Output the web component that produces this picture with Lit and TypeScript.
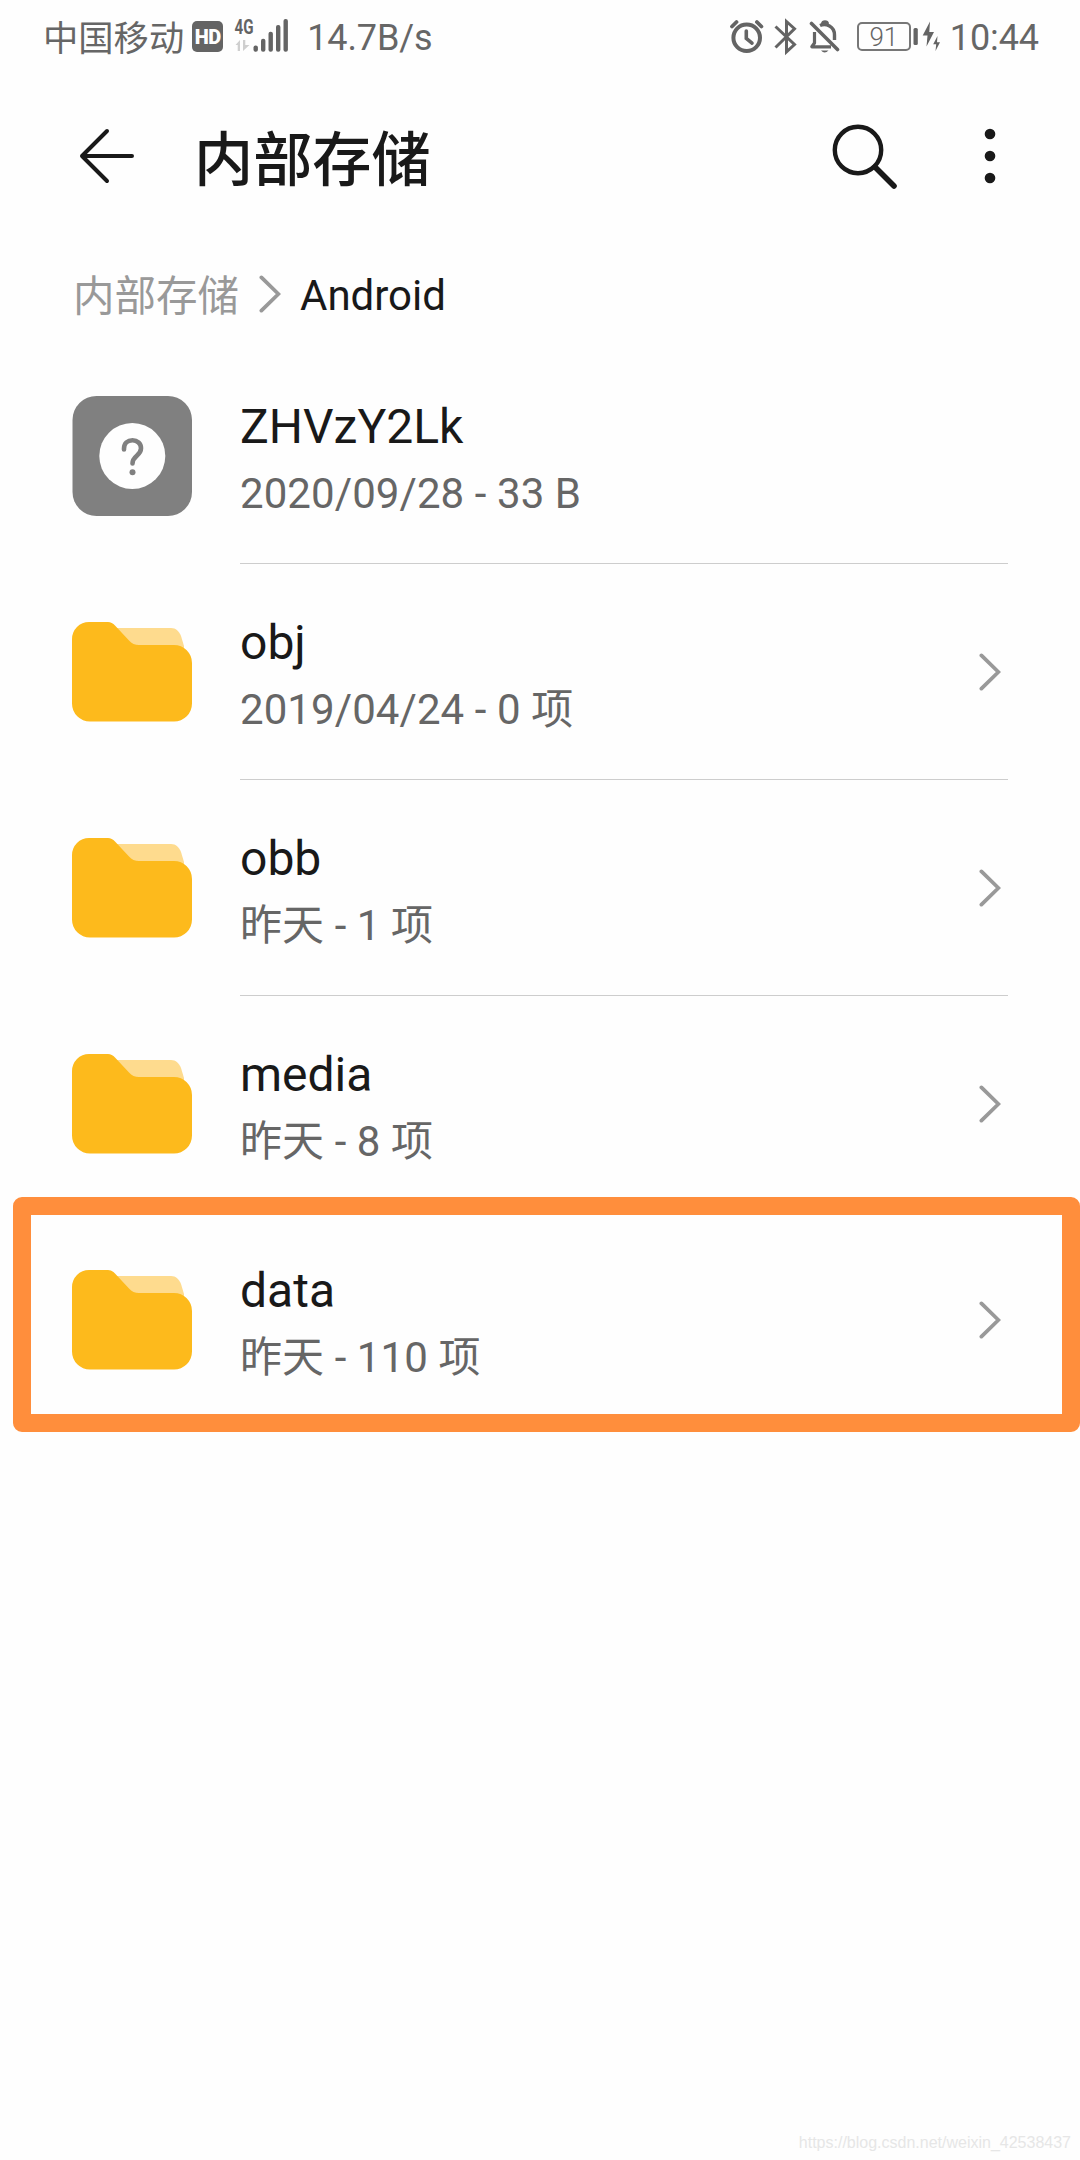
import { LitElement, html, svg, css, nothing } from "lit";
import { customElement, property } from "lit/decorators.js";
import { classMap } from "lit/directives/class-map.js";

interface Entry {
  name: string;
  info: string;
  kind: "file" | "folder";
  divider?: boolean;
  marked?: boolean;
}

const ENTRIES: Entry[] = [
  { name: "ZHVzY2Lk", info: "2020/09/28 - 33 B", kind: "file", divider: true },
  { name: "obj", info: "2019/04/24 - 0 项", kind: "folder", divider: true },
  { name: "obb", info: "昨天 - 1 项", kind: "folder", divider: true },
  { name: "media", info: "昨天 - 8 项", kind: "folder" },
  { name: "data", info: "昨天 - 110 项", kind: "folder", marked: true },
];

const chevron = (cls: string) => html`
  <svg class=${cls} width="22" height="38" viewBox="0 0 22 38" fill="none"
    stroke="currentColor" stroke-width="3.8" stroke-linecap="round">
    <path d="M2.4 2.4 19.4 19 2.4 35.6" />
  </svg>`;

const folderIcon = html`
  <svg width="120" height="120" viewBox="0 0 120 120">
    <path fill="#fedb8e" d="M36 16H99C104 16 107 19.500 109 24L112 34V46H60Z" />
    <path fill="#fdba1c"
      d="M17 10H36Q40 10 43 13.500L57 28.500Q61 33 67 33H102A18 18 0 0 1 120 51V91.500A18 18 0 0 1 102 109.500H18A18 18 0 0 1 0 91.500V27A17 17 0 0 1 17 10Z" />
  </svg>`;

const unknownIcon = html`
  <svg width="120" height="120" viewBox="0 0 120 120">
    <rect x="0.500" width="119.500" height="120" rx="24" fill="#808080" />
    <circle cx="60.300" cy="60" r="33" fill="#fefefe" />
    <path d="M52 53.500V52.500C52 47.500 55.700 44.200 60.500 44.200S69 47.600 69 52.300C69 60 60.500 59.500 60.500 67.500"
      fill="none" stroke="#808080" stroke-width="4.600" stroke-linecap="round" />
    <circle cx="60.500" cy="76.300" r="3" fill="#808080" />
  </svg>`;

@customElement("status-bar")
class StatusBar extends LitElement {
  static styles = css`
    :host {
      display: flex;
      justify-content: space-between;
      height: 74px;
      padding: 0 41px 0 43px;
      box-sizing: border-box;
      color: #666;
      font-size: 36px;
      line-height: 76px;
    }
    .side { display: flex; align-items: flex-start; white-space: nowrap; }
    .carrier { font-size: 35.3px; line-height: 78px; }
    .hd {
      width: 31px;
      height: 31px;
      margin: 21px 0 0 8px;
      border-radius: 5px;
      background: #646464;
      color: #fefefe;
      font-size: 20px;
      font-weight: 900;
      line-height: 32px;
      letter-spacing: -0.5px;
      text-align: center;
    }
    .signal { margin: 16px 0 0 10px; }
    .rate { margin-left: 17px; letter-spacing: -0.1px; }
    .icons { margin: 16px 17px 0 0; }
    .battery {
      width: 54px;
      height: 29px;
      margin-top: 22px;
      border: 2px solid #777;
      border-radius: 5px;
      box-sizing: border-box;
      font-size: 26px;
      font-weight: 300;
      line-height: 27px;
      text-align: center;
    }
    .charge { margin: 16px 8px 0 2px; }
    .time { letter-spacing: -0.1px; }
  `;

  render() {
    const bars = [45.5, 38.7, 31.7, 25, 19];
    return html`
      <div class="side">
        <span class="carrier">中国移动</span>
        <span class="hd">HD</span>
        <svg class="signal" width="57" height="40" viewBox="233 16 57 40" fill="#646464">
          <text x="234.500" y="34" font-size="20" font-weight="700"
            textLength="19" lengthAdjust="spacingAndGlyphs">4G</text>
          <g fill="#cfcfcf">
            <path d="M235.500 45 240 40V51H237.700V45Z" />
            <path d="M243 40H245.300V45H249.500L243 51Z" />
          </g>
          ${bars.map((top, i) => svg`
            <rect x=${253.5 + i * 7.5} y=${top} width="4.400" height=${51.8 - top} rx="2" />`)}
        </svg>
        <span class="rate">14.7B/s</span>
      </div>
      <div class="side">
        <svg class="icons" width="112" height="40" viewBox="728 16 112 40" fill="none" stroke="#646464">
          <circle cx="746.700" cy="37.700" r="13.300" stroke-width="4" />
          <path d="M732 26.500 736.500 22M756.900 22 761.400 26.500" stroke-width="3.800" stroke-linecap="round" />
          <path d="M746.300 31V38.500L752 43.200" stroke-width="3.600" stroke-linecap="round" />
          <path d="M775.500 26.500 794.500 44.500 786.500 51.800V21.500L794.500 28.700 775.500 47.500" stroke-width="3" />
          <path d="M811.500 23.500 837.500 49.500" stroke-width="3.600" stroke-linecap="round" />
          <path d="M814.500 32V43L811.800 46.800H831" stroke-width="3.200" stroke-linejoin="round" />
          <path d="M820 25.500C826 22.800 834.500 26.500 834.500 35V40" stroke-width="3.400" />
          <path d="M822.500 24C822 20.800 828 20.800 827.500 24" stroke-width="2.800" />
          <path d="M821 50.500H828.500Q824.700 54.500 821 50.500Z" fill="#646464" stroke="none" />
        </svg>
        <span class="battery">91</span>
        <svg class="charge" width="29" height="40" viewBox="913 16 29 40" fill="#646464">
          <rect x="913.500" y="28" width="4.300" height="17" rx="1.500" />
          <path d="M930 21.500 922.700 35.500H927.500L926.500 46.500 934 32H929.300Z" />
          <path d="M937.500 36 933.200 44.200H936.200L935.500 51 940 42.200H937Z" />
        </svg>
        <span class="time">10:44</span>
      </div>`;
  }
}

@customElement("file-row")
class FileRow extends LitElement {
  @property({ attribute: false }) entry!: Entry;

  static styles = css`
    :host { display: block; }
    .row {
      position: relative;
      display: flex;
      height: 216px;
      padding: 0 72px;
      box-sizing: border-box;
    }
    .icon { display: flex; align-items: center; width: 120px; margin-right: 48px; }
    .body { flex: 1; display: flex; box-sizing: border-box; border-bottom: 1px solid transparent; }
    .divided { border-bottom-color: #cdcdcd; }
    .texts { flex: 1; padding-top: 49px; white-space: nowrap; }
    .name { font-size: 48px; line-height: 60px; color: #191919; }
    .info {
      margin-top: 11px;
      font-size: 42px;
      line-height: 52px;
      letter-spacing: 0.08px;
      color: #666;
    }
    .go { align-self: center; margin-right: 7px; color: #999; }
    .frame {
      position: absolute;
      inset: -15px 0 -4px 13px;
      border: 18px solid #ff8e3c;
      border-radius: 9px;
    }
  `;

  render() {
    const e = this.entry;
    return html`
      <div class="row">
        <div class="icon">${e.kind === "folder" ? folderIcon : unknownIcon}</div>
        <div class=${classMap({ body: true, divided: !!e.divider })}>
          <div class="texts">
            <div class="name">${e.name}</div>
            <div class="info">${e.info}</div>
          </div>
          ${e.kind === "folder" ? chevron("go") : nothing}
        </div>
        ${e.marked ? html`<div class="frame"></div>` : nothing}
      </div>`;
  }
}

@customElement("app-root")
class AppRoot extends LitElement {
  static styles = css`
    :host {
      display: flex;
      flex-direction: column;
      width: 1080px;
      height: 2160px;
      background: #fefefe;
      color: #191919;
      font-family: Roboto, "Noto Sans CJK SC", sans-serif;
      overflow: hidden;
    }
    .header {
      display: flex;
      align-items: center;
      height: 164px;
      padding: 0 83px 0 78px;
    }
    .title {
      flex: 1;
      margin: 9px 0 0 58px;
      font-size: 59.2px;
      font-weight: 500;
      line-height: 80px;
    }
    .search { margin-right: 84px; }
    .crumbs {
      display: flex;
      align-items: center;
      height: 110px;
      padding: 6px 72px 0 73px;
      box-sizing: border-box;
      font-size: 42px;
      line-height: 60px;
    }
    .parent { padding-top: 2px; font-size: 41.5px; color: #999; }
    .sep { margin: 0 19px 4px 20px; color: #999; }
    .list { flex: 1; }
    .mark {
      padding: 0 9px 7px 0;
      font-family: "Liberation Sans", sans-serif;
      font-size: 16px;
      line-height: 20px;
      text-align: right;
      color: #e6e6e6;
    }
  `;

  render() {
    return html`
      <status-bar></status-bar>
      <div class="header">
        <svg width="58" height="58" viewBox="78 127 58 58" fill="none" stroke="#191919"
          stroke-width="4" stroke-linecap="round" stroke-linejoin="round">
          <path d="M107 131 82 156 107 181M82 156H132" />
        </svg>
        <div class="title">内部存储</div>
        <svg class="search" width="68" height="68" viewBox="831 122 68 68" fill="none" stroke="#191919">
          <circle cx="858" cy="150" r="23.200" stroke-width="4.400" />
          <path d="M875 167 894 186" stroke-width="5.600" stroke-linecap="round" />
        </svg>
        <svg width="14" height="58" viewBox="983 127 14 58" fill="#191919">
          <circle cx="990" cy="134" r="5.300" />
          <circle cx="990" cy="156" r="5.300" />
          <circle cx="990" cy="178" r="5.300" />
        </svg>
      </div>
      <div class="crumbs">
        <span class="parent">内部存储</span>
        ${chevron("sep")}
        <span>Android</span>
      </div>
      <div class="list">
        ${ENTRIES.map((entry) => html`<file-row .entry=${entry}></file-row>`)}
      </div>
      <div class="mark">https://blog.csdn.net/weixin_42538437</div>`;
  }
}
